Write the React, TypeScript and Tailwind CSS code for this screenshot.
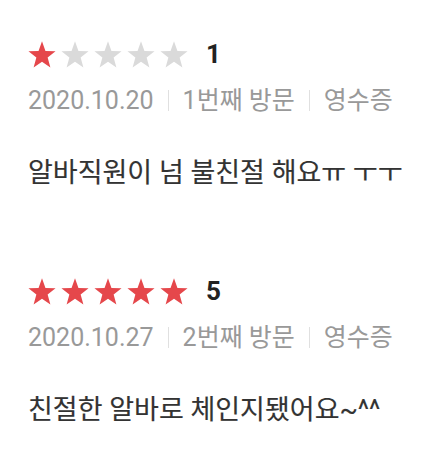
import { Fragment } from "react";

interface Review {
    rating: number;
    date: string;
    visit: string;
    proof: string;
    body: string;
}

const reviews: Review[] = [
    { rating: 1, date: "2020.10.20", visit: "1번째 방문", proof: "영수증", body: "알바직원이 넘 불친절 해요ㅠ ㅜㅜ" },
    { rating: 5, date: "2020.10.27", visit: "2번째 방문", proof: "영수증", body: "친절한 알바로 체인지됐어요~^^" },
];

function Star({ filled }: { filled: boolean }) {
    return (
        <svg viewBox="0 0 24 23.5" className={filled ? "w-[28px] h-[27px] fill-[#e5474b]" : "w-[28px] h-[27px] fill-[#dadada]"}>
            <polygon points="12,0.3 15,8.6 23.8,8.9 16.9,14.4 19.3,23 12,18 4.7,23 7.1,14.4 0.2,8.9 9,8.6" />
        </svg>
    );
}

function ReviewItem({ review }: { review: Review }) {
    const meta = [review.date, review.visit, review.proof];
    return (
        <div className="flex flex-col">
            <div className="flex items-center h-[28px]">
                <div className="flex gap-[5px]">
                    {[1, 2, 3, 4, 5].map((n) => (
                        <Star key={n} filled={n <= review.rating} />
                    ))}
                </div>
                <span className="ml-[18px] text-[26px] font-bold text-[#222] leading-none">{review.rating}</span>
            </div>
            <div className="flex items-center mt-[17px] h-[30px] text-[25px] text-[#999] leading-none">
                {meta.map((m, i) => (
                    <Fragment key={i}>
                        {i > 0 && <span className="mx-[14px] w-px h-[21px] bg-[#e0e0e0]" />}
                        <span>{m}</span>
                    </Fragment>
                ))}
            </div>
            <p className="mt-[42px] text-[27px] text-[#333] leading-[32px] [-webkit-text-stroke:0.15px_#333]">{review.body}</p>
        </div>
    );
}

export default function App() {
    return (
        <div className="w-[427px] h-[456px] bg-white pl-[28px] pt-[40px] flex flex-col gap-[88px] font-['Roboto','Noto_Sans_CJK_KR',sans-serif]">
            {reviews.map((r, i) => (
                <ReviewItem key={i} review={r} />
            ))}
        </div>
    );
}
